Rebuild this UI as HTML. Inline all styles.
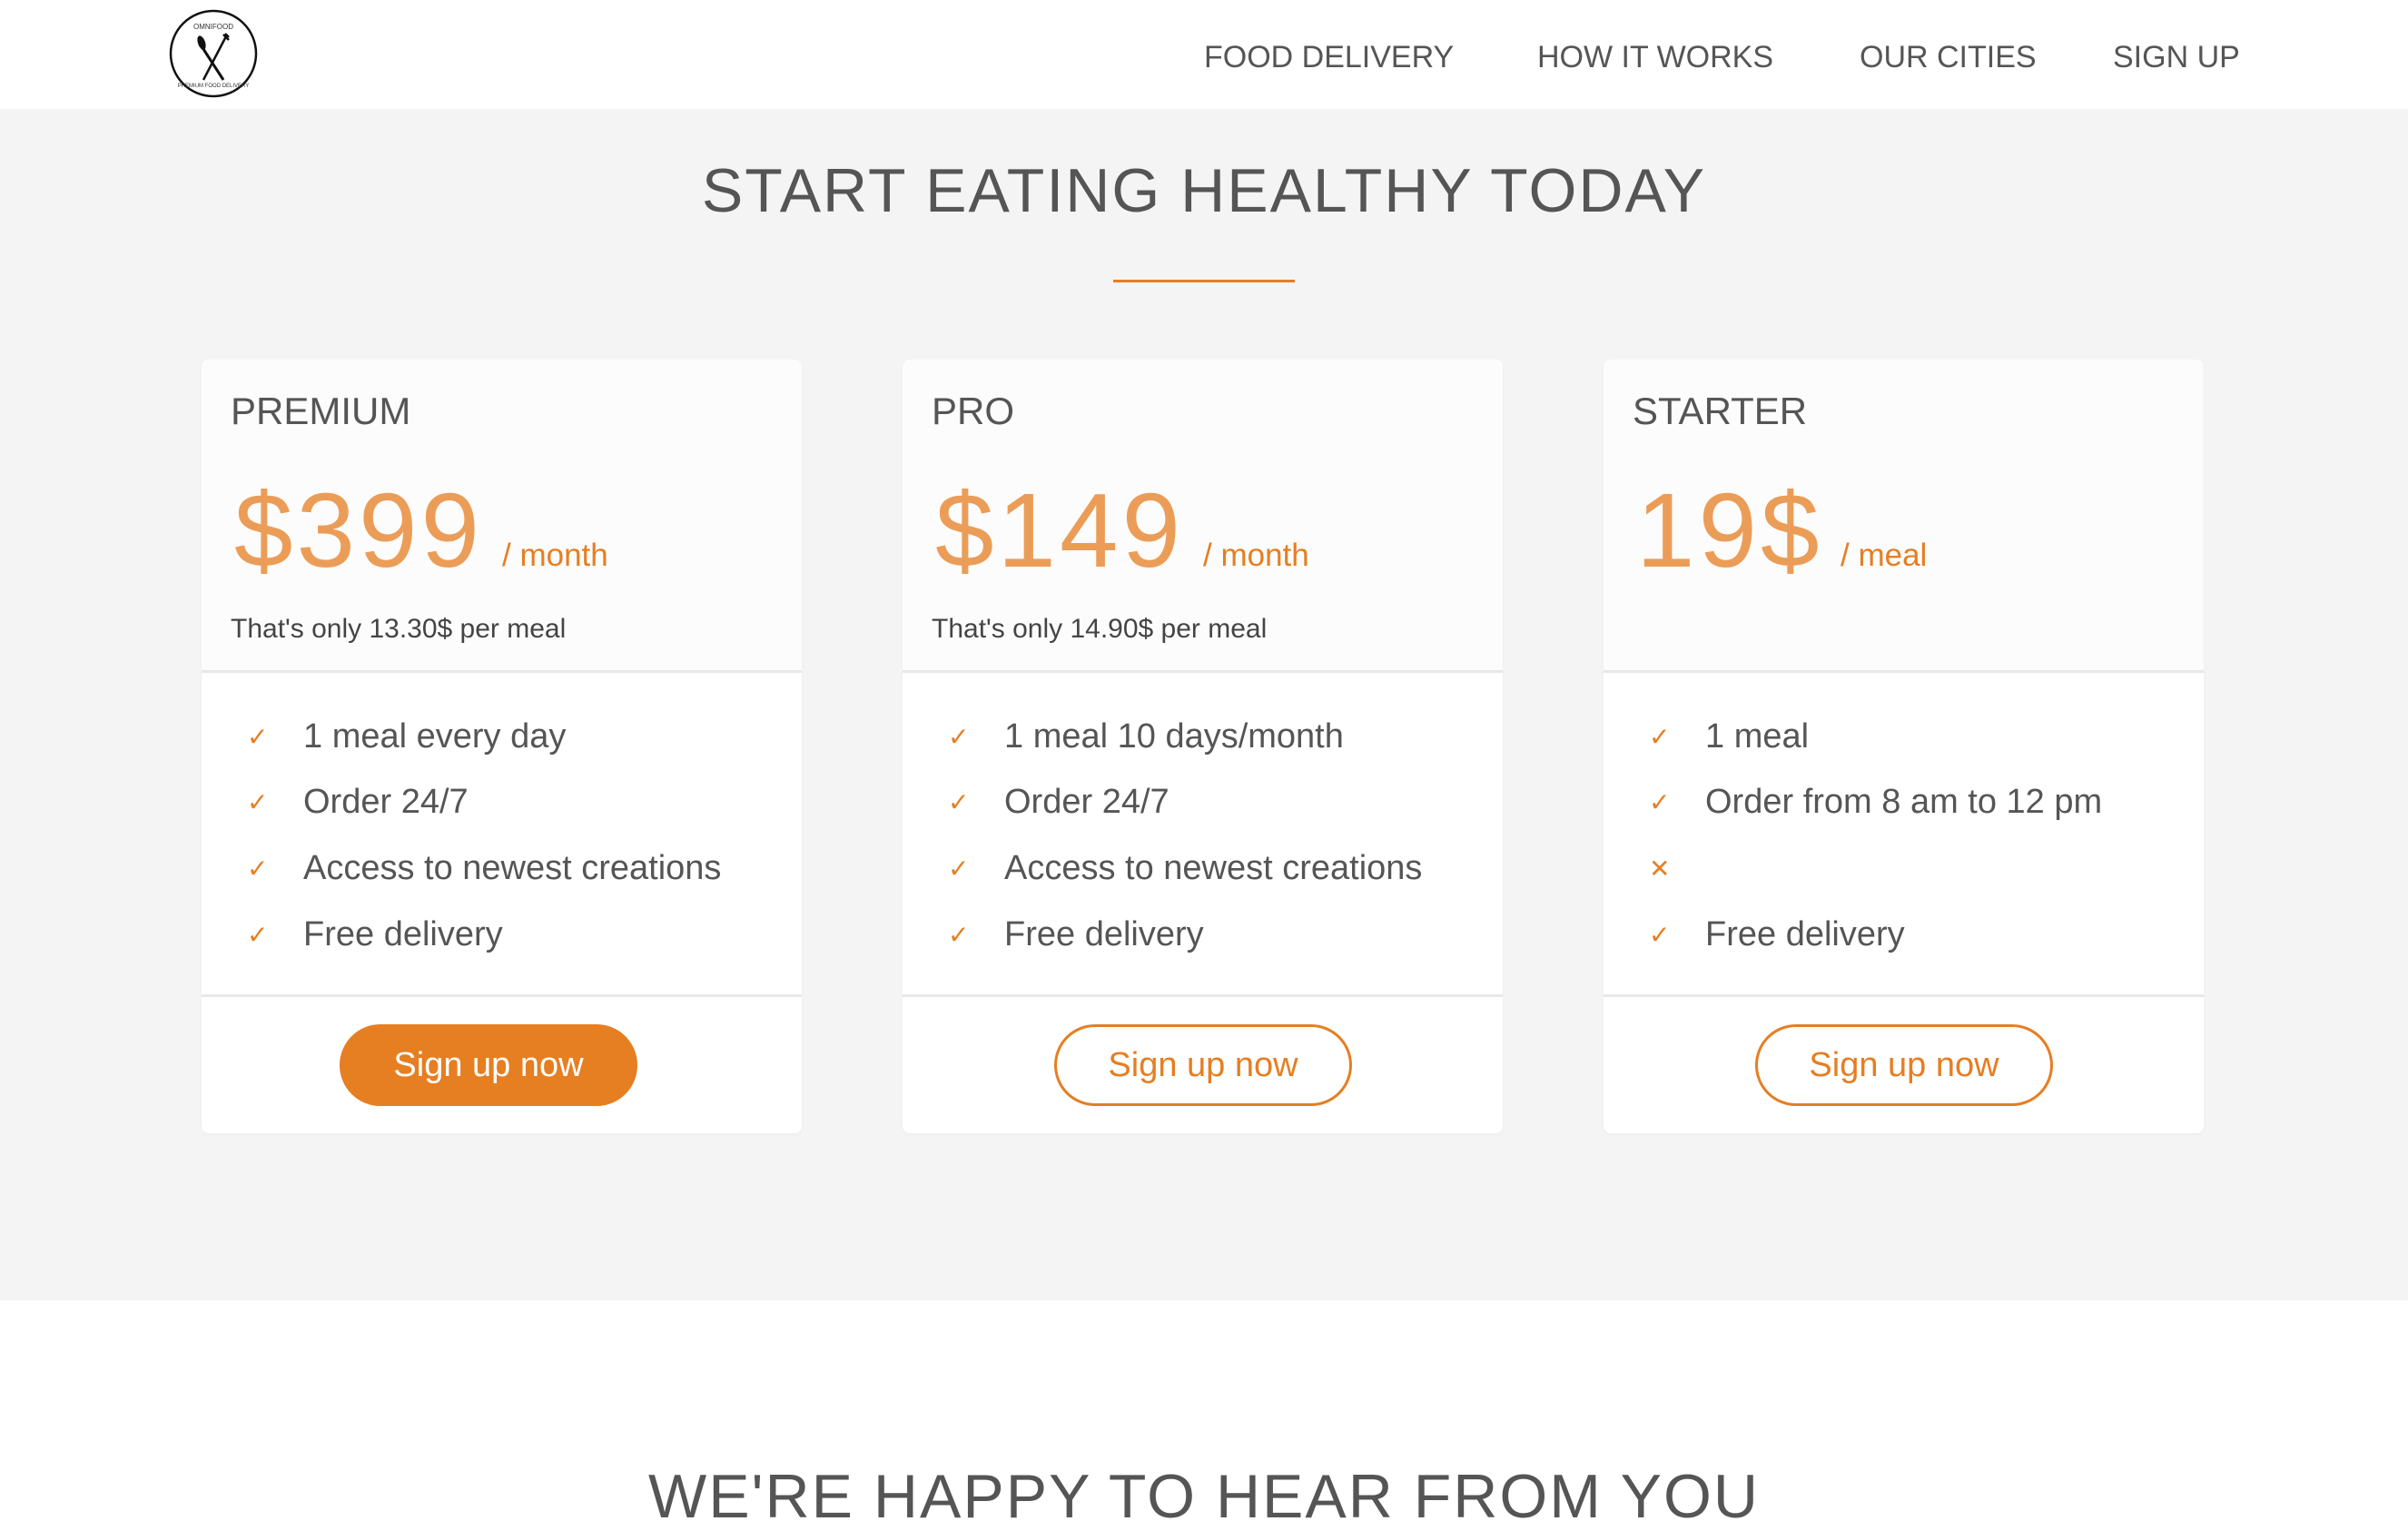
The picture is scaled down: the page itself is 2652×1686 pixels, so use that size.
<!DOCTYPE html>
<html><head><meta charset="utf-8"><style>
*{margin:0;padding:0;box-sizing:border-box}
body{width:2652px;height:1680px;overflow:hidden;background:#fff;font-family:"Liberation Sans",sans-serif;color:#555;position:relative}
.abs{position:absolute;white-space:nowrap}
.nav{position:absolute;left:0;top:0;width:2652px;height:120px;background:#fff}
.nav a{position:absolute;top:46px;font-size:34px;color:#555;text-decoration:none;line-height:1}
.sec{position:absolute;left:0;top:120px;width:2652px;height:1312px;background:#f4f4f4}
h2{position:absolute;left:0;width:2652px;text-align:center;font-weight:normal;font-size:68px;letter-spacing:2px;color:#555;line-height:1}
.card{position:absolute;top:396px;width:661px;height:852px;background:#fff;border-radius:8px;overflow:hidden;box-shadow:0 2px 4px rgba(0,0,0,0.03)}
.top{position:absolute;left:0;top:0;width:661px;height:345px;background:#fcfcfc;border-bottom:3px solid #e8e8e8}
.mid{position:absolute;left:0;top:345px;width:661px;height:357px;border-bottom:3px solid #e8e8e8}
.name{position:absolute;left:32px;top:36px;font-size:42px;line-height:1}
.price{position:absolute;left:36px;top:130px;font-size:116px;color:#e67e22;line-height:1;font-weight:normal;letter-spacing:4px;opacity:.75}
.per{position:absolute;top:198px;font-size:35px;color:#e67e22;line-height:1}
.only{position:absolute;left:32px;top:282px;font-size:30px;line-height:1;color:#444}
.li{position:absolute;left:0;font-size:38px;line-height:1}
.li i{position:absolute;left:50px;font-style:normal;color:#e67e22;font-size:28px;top:6px}
.li span{position:absolute;left:112px;top:0;white-space:nowrap}
.btn{position:absolute;left:167px;top:732px;width:328px;height:90px;border-radius:45px;border:3px solid #e67e22;color:#e67e22;font-size:38px;text-align:center;line-height:84px}
.btn.f{left:152px;background:#e67e22;color:#fff}
</style></head><body>
<div class="nav">
<svg class="abs" style="left:186px;top:10px" width="98" height="98" viewBox="0 0 98 98">
<circle cx="49" cy="49" r="47" fill="#fff" stroke="#111" stroke-width="2.5"/>
<text x="49" y="22" font-size="8" text-anchor="middle" fill="#333" font-family="Liberation Sans">OMNIFOOD</text>
<path d="M35 30 Q31 38 38 44 L60 78" stroke="#111" stroke-width="3" fill="none"/>
<ellipse cx="36" cy="37" rx="4" ry="8" fill="#111" transform="rotate(-20 36 37)"/>
<path d="M63 30 L38 78 M60 28 L66 34 M62 27 L66 31" stroke="#111" stroke-width="2.5" fill="none"/>
<text x="49" y="86" font-size="6" text-anchor="middle" fill="#333" font-family="Liberation Sans">PREMIUM FOOD DELIVERY</text>
</svg>
<a style="left:1326px">FOOD DELIVERY</a>
<a style="left:1693px">HOW IT WORKS</a>
<a style="left:2048px">OUR CITIES</a>
<a style="left:2327px">SIGN UP</a>
</div>
<div class="sec"></div>
<h2 style="top:176px">START EATING HEALTHY TODAY</h2>
<div class="abs" style="left:1226px;top:308px;width:200px;height:3px;background:#e67e22"></div>

<div class="card" style="left:222px">
<div class="top"><div class="name">PREMIUM</div><div class="price">$399</div><div class="per" style="left:331px">/ month</div><div class="only">That's only 13.30$ per meal</div></div>
<div class="mid"></div>
<div class="li" style="top:396px"><i>✓</i><span>1 meal every day</span></div>
<div class="li" style="top:468px"><i>✓</i><span>Order 24/7</span></div>
<div class="li" style="top:541px"><i>✓</i><span>Access to newest creations</span></div>
<div class="li" style="top:614px"><i>✓</i><span>Free delivery</span></div>
<div class="btn f">Sign up now</div>
</div>

<div class="card" style="left:994px">
<div class="top"><div class="name">PRO</div><div class="price">$149</div><div class="per" style="left:331px">/ month</div><div class="only">That's only 14.90$ per meal</div></div>
<div class="mid"></div>
<div class="li" style="top:396px"><i>✓</i><span>1 meal 10 days/month</span></div>
<div class="li" style="top:468px"><i>✓</i><span>Order 24/7</span></div>
<div class="li" style="top:541px"><i>✓</i><span>Access to newest creations</span></div>
<div class="li" style="top:614px"><i>✓</i><span>Free delivery</span></div>
<div class="btn">Sign up now</div>
</div>

<div class="card" style="left:1766px">
<div class="top"><div class="name">STARTER</div><div class="price">19$</div><div class="per" style="left:261px">/ meal</div></div>
<div class="mid"></div>
<div class="li" style="top:396px"><i>✓</i><span>1 meal</span></div>
<div class="li" style="top:468px"><i>✓</i><span>Order from 8 am to 12 pm</span></div>
<div class="li" style="top:541px"><i>✕</i><span></span></div>
<div class="li" style="top:614px"><i>✓</i><span>Free delivery</span></div>
<div class="btn">Sign up now</div>
</div>

<h2 style="top:1614px">WE'RE HAPPY TO HEAR FROM YOU</h2>
</body></html>
